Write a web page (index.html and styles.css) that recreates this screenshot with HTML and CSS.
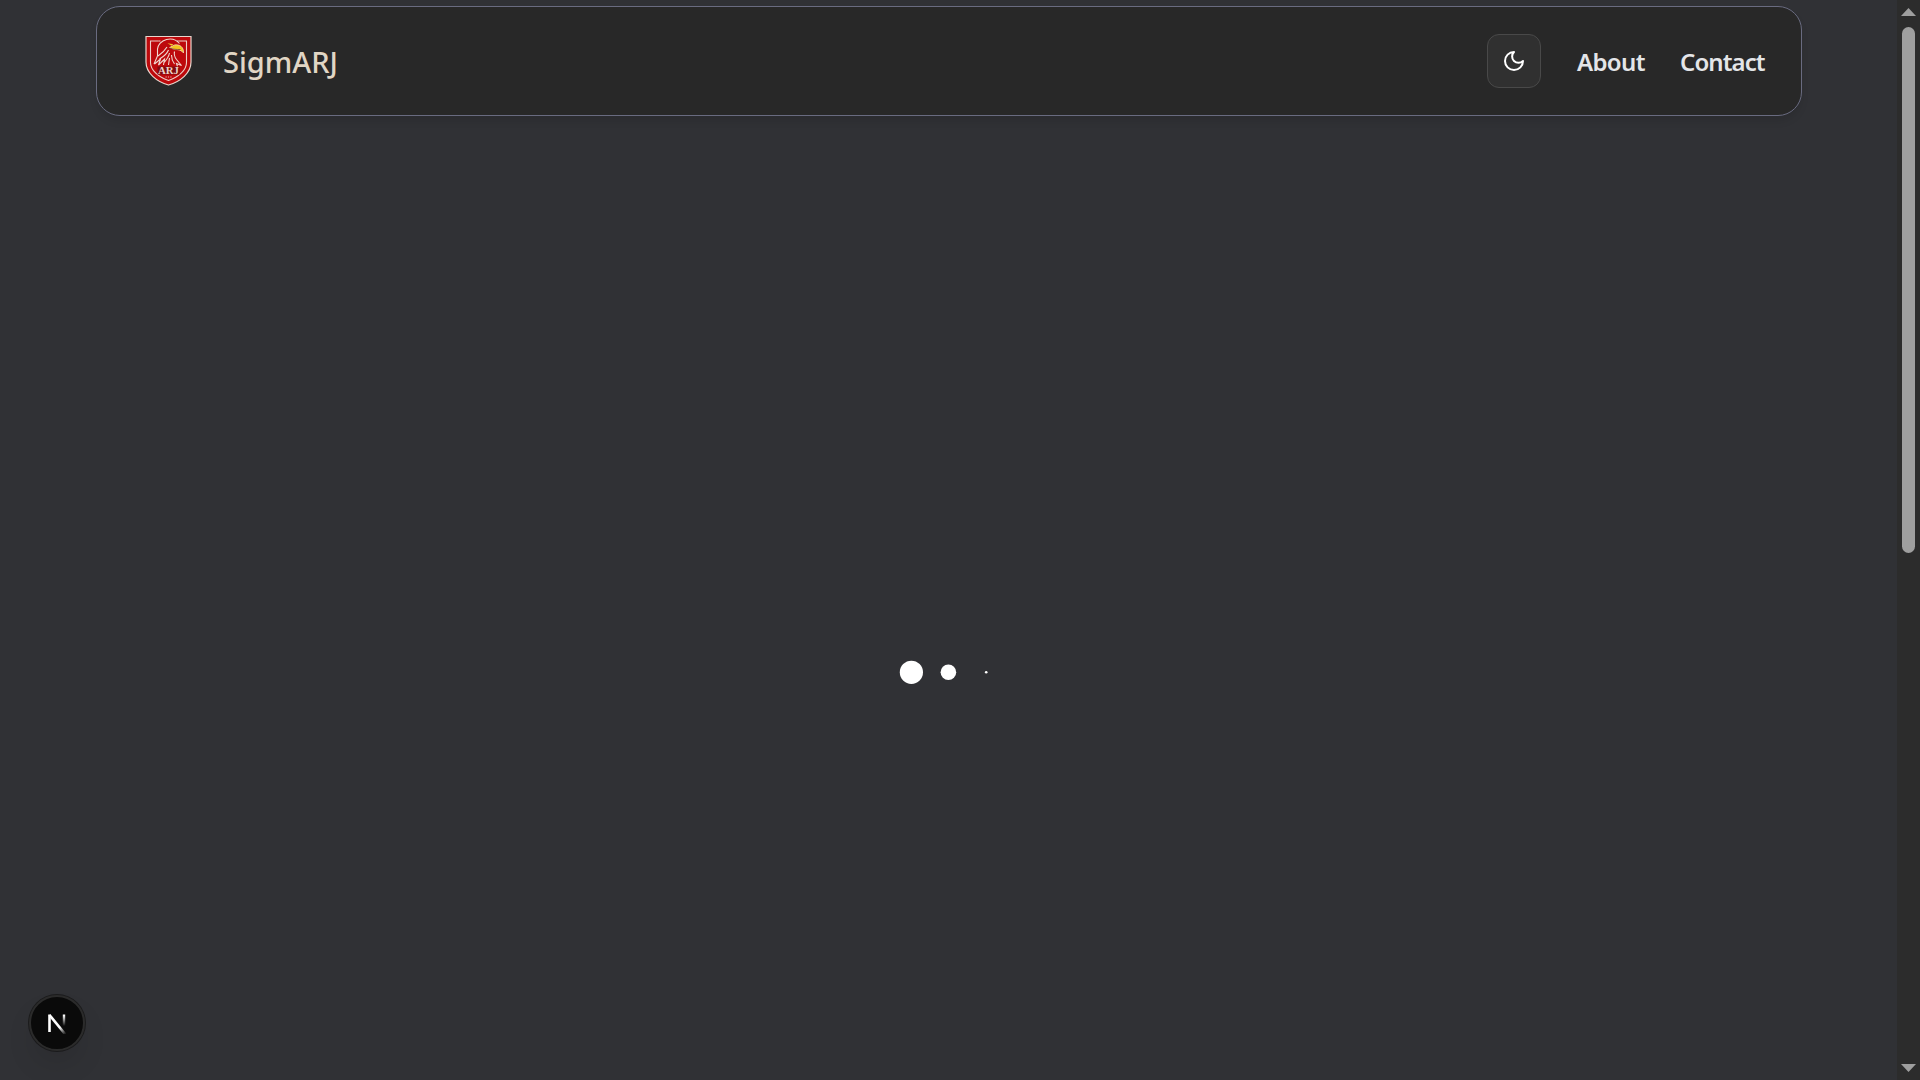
FILE: index.html
```html
<!DOCTYPE html>
<html lang="en">
<head>
<meta charset="utf-8">
<title>SigmARJ</title>
<link rel="stylesheet" href="styles.css">
</head>
<body>
<div class="page">
  <header class="navbar">
    <a class="brand">
      <svg class="logo" viewBox="0 0 46 50" aria-hidden="true">
        <path d="M.5.5h45v25.500C45.500 37 35 45.500 23 49 11 45.500.5 37 .5 26Z" fill="#bd090c" stroke="#e9d5cc" stroke-width="1.200"/>
        <path d="M13 5H5v21.500c0 8 8 14.500 18 18 10-3.500 18-10 18-18V5h-8" fill="none" stroke="#eccfc8" stroke-width="1.100"/>
        <path d="M8.500 27.500 12 20v-8l5.500-6 8-3 7 2 4 4-6 6 2 7 4 7H15Z" fill="#bd090c"/>
        <path d="M13 5h2M31 5h2M8.500 28l3.500-8v-7q1-7 9-9.500 8-2 13 4M9 28l6-5-2 6 6-6-1 6M12.500 20q6-4 9-9M14 23q7-4 9-9M18 27q5-5 6-10M29 15.500q-1 4 2 8l5 6-5-2 1 3M26 19q0 5 3 9M24 22l-1 7" fill="none" stroke="#f0d8d0" stroke-width="1.100"/>
        <path d="m22 7.200 6 1-2 1.500Z" fill="#f1c72d"/>
        <path d="M29 9c5-1 9.500 2 9 8-2-3-5-3.500-9-3.500l-5-2Z" fill="#f4c51f" stroke="#f8e8c5" stroke-width=".7"/>
        <path d="M24 12c4 1.500 7 1.500 11 1.500" fill="none" stroke="#6b2610" stroke-width=".7"/>
        <path d="M12 30.500h22v8H12Z" fill="#800b0e"/>
        <text x="23" y="38.200" text-anchor="middle" textLength="21" lengthAdjust="spacingAndGlyphs" class="logo-text">ARJ</text>
        <path d="M20 41h6" stroke="#e9b8ae" stroke-width="1.200" stroke-dasharray="1.200 1.200"/>
      </svg>
      <span class="brand-name">SigmARJ</span>
    </a>
    <nav class="links">
      <button class="theme" aria-label="Toggle theme">
        <svg width="24" height="24" viewBox="0 0 24 24" fill="none" stroke="#fff" stroke-width="2" stroke-linecap="round" stroke-linejoin="round"><path d="M12 3a6 6 0 0 0 9 9 9 9 0 1 1-9-9Z"/></svg>
      </button>
      <a class="link about">About</a>
      <a class="link contact">Contact</a>
    </nav>
  </header>
  <main class="loading">
    <svg width="102" height="24" viewBox="0 0 102 24" fill="#fff"><circle cx="12.400" cy="12.300" r="11.600"/><circle cx="49.400" cy="12.300" r="7.800"/><circle cx="87.200" cy="12.300" r="1.300"/></svg>
  </main>
</div>
<aside class="scrollbar">
  <svg width="15" height="8" viewBox="0 0 15 8"><path d="M7.500 0 15 8H0Z" fill="#9f9f9f"/></svg>
  <div class="track"><div class="thumb"></div></div>
  <svg width="15" height="8" viewBox="0 0 15 8"><path d="M0 0h15L7.500 8Z" fill="#9f9f9f"/></svg>
</aside>
<div class="dev-badge">
  <svg width="20" height="22" viewBox="0 0 20 22" fill="none">
    <defs>
      <linearGradient id="diag" gradientUnits="userSpaceOnUse" x1="10" y1="11" x2="18" y2="21"><stop offset=".4" stop-color="#fff"/><stop offset="1" stop-color="#fff" stop-opacity=".15"/></linearGradient>
      <linearGradient id="stem" gradientUnits="userSpaceOnUse" x1="16" y1="2" x2="16" y2="14"><stop offset=".1" stop-color="#fff"/><stop offset="1" stop-color="#fff" stop-opacity="0"/></linearGradient>
    </defs>
    <path d="M2.500 20V2.500" stroke="#fff" stroke-width="2.600"/>
    <path d="M2.500 3 18 22" stroke="url(#diag)" stroke-width="2.600"/>
    <path d="M17 2.500v12" stroke="url(#stem)" stroke-width="2.400"/>
  </svg>
</div>
</body>
</html>
```
FILE: styles.css
```css
* { box-sizing: border-box; }
body {
  margin: 0;
  height: 1080px;
  display: flex;
  overflow: hidden;
  background: #303135;
  font-family: "Noto Sans", "Open Sans", sans-serif;
}
.page {
  flex: 1;
  display: flex;
  flex-direction: column;
  padding-top: 6px;
}
.navbar {
  width: 1706px;
  height: 110px;
  margin-left: 96px;
  padding: 0 35px 0 47.500px;
  display: flex;
  align-items: center;
  justify-content: space-between;
  background: #282828;
  border: 1px solid #696b80;
  border-radius: 24px;
  box-shadow: 0 6px 10px -2px rgba(0, 0, 0, .12);
}
.brand, .links { display: flex; align-items: center; }
.brand { gap: 31.500px; }
.logo { width: 47px; height: 50px; }
.logo-text {
  font: 700 10px "Liberation Serif", serif;
  fill: #ecd2c8;
}
.brand-name {
  font-size: 29px;
  font-weight: 500;
  line-height: 40px;
  color: #e1d6c5;
  padding-top: 1px;
}
.links { gap: 36px; }
.theme {
  width: 54px;
  height: 54px;
  padding: 0;
  display: grid;
  place-items: center;
  background: #303030;
  border: 1px solid #494949;
  border-radius: 12px;
}
.link {
  font-size: 24px;
  font-weight: 600;
  line-height: 36px;
  color: #e4e5e8;
  padding-top: 2px;
}
.about {
  width: 67px;
  letter-spacing: -.65px;
}
.contact {
  width: 86px;
  letter-spacing: -.9px;
}
.loading {
  flex: 1;
  display: flex;
  justify-content: center;
  padding: 544px 0 0 3px;
}
.scrollbar {
  width: 23px;
  padding: 8px 0;
  display: flex;
  flex-direction: column;
  align-items: center;
  background: #2c2c2c;
}
.track { flex: 1; padding-top: 11px; }
.thumb {
  width: 13px;
  height: 526px;
  border-radius: 7px;
  background: #9f9f9f;
}
.dev-badge {
  position: absolute;
  left: 29px;
  top: 995px;
  width: 56px;
  height: 56px;
  display: grid;
  place-items: center;
  background: #0a0a0a;
  border: 2px solid #2b2b2b;
  border-radius: 50%;
  box-shadow: 0 0 0 1px #1b1b1c, 0 16px 32px -8px rgba(0, 0, 0, .16);
}
```
